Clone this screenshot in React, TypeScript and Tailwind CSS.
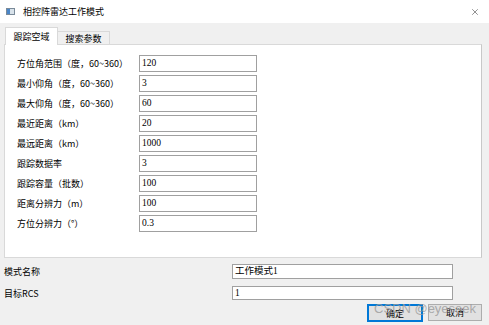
import { X } from 'lucide-react'

const rows = [
  { label: '方位角范围（度，60~360）', value: '120' },
  { label: '最小仰角（度，60~360）', value: '3' },
  { label: '最大仰角（度，60~360）', value: '60' },
  { label: '最近距离（km）', value: '20' },
  { label: '最远距离（km）', value: '1000' },
  { label: '跟踪数据率', value: '3' },
  { label: '跟踪容量（批数）', value: '100' },
  { label: '距离分辨力（m）', value: '100' },
  { label: '方位分辨力（°）', value: '0.3' },
]

const cjk = { fontFamily: '"Noto Sans CJK SC", "Noto Sans", sans-serif' }

function Field({ value, className }: { value: string; className: string }) {
  return (
    <div
      className={`flex items-center bg-white border border-[#a0a0a0] pl-[2px] text-[9.5px] text-black ${className}`}
      style={{ fontFamily: '"Liberation Serif", "Noto Sans CJK SC", serif' }}
    >
      {value}
    </div>
  )
}

export default function App() {
  return (
    <div className="relative flex flex-col w-[489px] h-[325px] overflow-hidden bg-[#f0f0f0] text-black" style={cjk}>
      {/* title bar */}
      <div className="flex items-center h-[23px] bg-white shrink-0">
        <svg className="ml-[6px]" width="9" height="7" viewBox="0 0 9 7">
          <rect x="0.5" y="0.5" width="8" height="6" fill="#fff" stroke="#7a8a99" />
          <rect x="1" y="1" width="3" height="5" fill="#4a86c8" />
          <rect x="4" y="1" width="4" height="5" fill="#d8e2ea" />
        </svg>
        <span className="ml-[8px] text-[9px] leading-none">相控阵雷达工作模式</span>
        <X className="ml-auto mr-[9px] text-[#333]" size={10} strokeWidth={1.3} />
      </div>

      {/* tabs */}
      <div className="flex items-end pt-[4px] pl-[5px] h-[21px] shrink-0">
        <div className="relative z-10 -mb-px flex items-center justify-center w-[53px] h-[18px] bg-white border border-b-0 border-[#d9d9d9] text-[9px] leading-none">
          跟踪空域
        </div>
        <div className="flex items-center justify-center w-[52px] h-[13px] bg-[#f0f0f0] border border-l-0 border-b-0 border-[#d9d9d9] text-[9px] leading-none pt-px">
          搜索参数
        </div>
      </div>

      {/* pane */}
      <div className="ml-[4px] w-[478px] h-[214px] shrink-0 bg-white border border-[#d9d9d9] border-r-[#c8c8c8] pt-[10px] pl-[12px]">
        <div className="flex flex-col gap-[3px]">
          {rows.map((r) => (
            <div key={r.label} className="flex items-center h-[17px]">
              <span className="w-[122px] text-[9px] leading-none">{r.label}</span>
              <Field value={r.value} className="w-[118px] h-[17px]" />
            </div>
          ))}
        </div>
      </div>

      {/* bottom fields */}
      <div className="flex items-center mt-[6px] h-[14px]">
        <span className="w-[232px] pl-[4px] text-[9px] leading-none">模式名称</span>
        <Field value="工作模式1" className="w-[221px] h-[15px]" />
      </div>
      <div className="flex items-center mt-[8px] h-[14px]">
        <span className="w-[232px] pl-[4px] text-[9px] leading-none">目标RCS</span>
        <Field value="1" className="w-[221px] h-[14px]" />
      </div>

      {/* buttons */}
      <div className="flex justify-end gap-[5px] pr-[7px] mt-[4px]">
        <button className="flex items-center justify-center w-[56px] h-[18px] bg-[#e1e1e1] border-2 border-[#0078d7] text-[9px] leading-none">
          确定
        </button>
        <button className="flex items-center justify-center w-[54px] h-[17px] bg-[#e1e1e1] border border-[#adadad] text-[9px] leading-none">
          取消
        </button>
      </div>

      {/* watermark */}
      <span
        className="absolute left-[374px] top-[302px] text-[13px] leading-none text-[#9a9a9a]/80 pointer-events-none"
        style={{ fontFamily: '"Liberation Sans", sans-serif' }}
      >
        CSDN @eyeseek
      </span>
    </div>
  )
}
